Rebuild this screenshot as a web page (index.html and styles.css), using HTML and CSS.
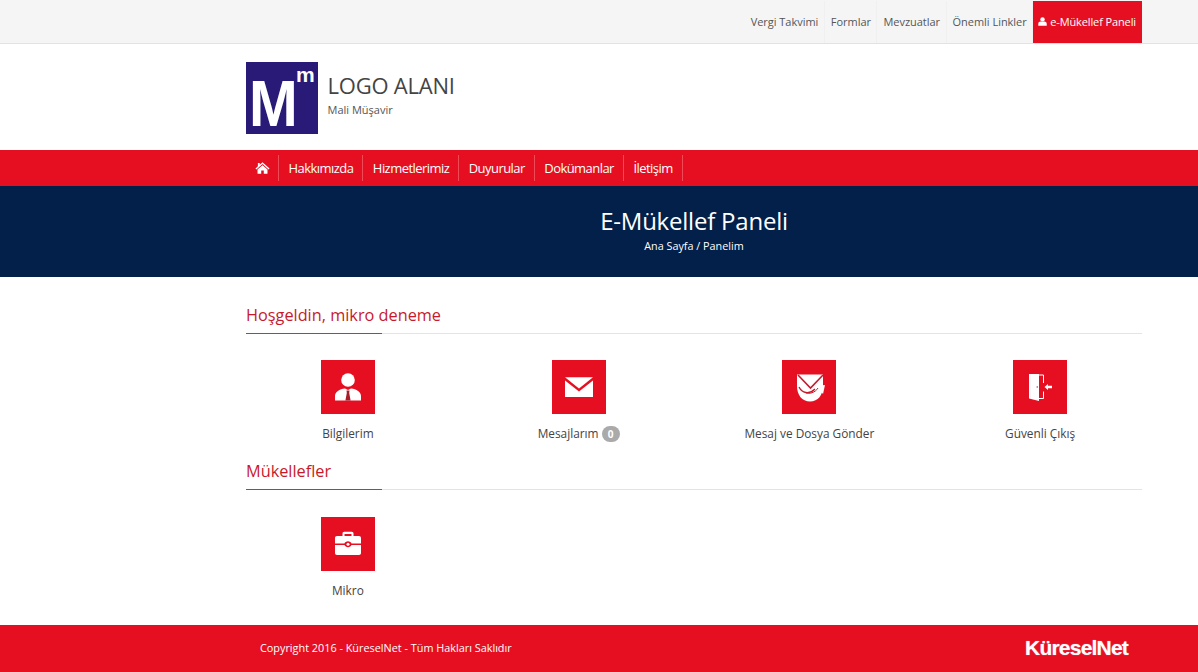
FILE: index.html
```html
<!DOCTYPE html>
<html lang="tr">
<head>
    <meta charset="UTF-8">
    <meta name="viewport" content="width=device-width, initial-scale=1.0">
    <title>E-Mükellef Paneli</title>
    <link rel="stylesheet" href="styles.css">
</head>
<body>
    <div class="topbar">
        <div class="container topbar-inner">
            <a class="top-link">Vergi Takvimi</a>
            <a class="top-link">Formlar</a>
            <a class="top-link">Mevzuatlar</a>
            <a class="top-link">Önemli Linkler</a>
            <a class="top-link top-link-active">
                <svg class="user-mini" viewBox="0 0 10 10"><circle cx="5" cy="2.7" r="2.5" fill="#fff"/><path d="M0.3 9.6V7.6C0.3 6 1.6 5.2 3 5.1C3.6 5.7 6.4 5.7 7 5.1C8.4 5.2 9.7 6 9.7 7.6V9.6Z" fill="#fff"/></svg>
                e-Mükellef Paneli
            </a>
        </div>
    </div>

    <div class="container header">
        <div class="logo-box">
            <span class="logo-big">M</span>
            <span class="logo-small">m</span>
        </div>
        <div class="logo-text">
            <div class="logo-title">LOGO ALANI</div>
            <div class="logo-sub">Mali Müşavir</div>
        </div>
    </div>

    <div class="navbar">
        <div class="container nav-inner">
            <a class="nav-link nav-home">
                <svg class="home-icon" viewBox="0 0 16 13"><path d="M8 0.4L15.6 7L14.7 8L8 2.3L1.3 8L0.4 7L3 4.7V1H5V3L8 0.4Z" fill="#fff"/><path d="M8 3.4L13.4 8V12.8H9.4V9.2H6.6V12.8H2.6V8Z" fill="#fff"/></svg>
            </a>
            <a class="nav-link">Hakkımızda</a>
            <a class="nav-link">Hizmetlerimiz</a>
            <a class="nav-link">Duyurular</a>
            <a class="nav-link">Dokümanlar</a>
            <a class="nav-link">İletişim</a>
        </div>
    </div>

    <div class="hero">
        <div class="container">
            <h1>E-Mükellef Paneli</h1>
            <div class="crumbs">Ana Sayfa / Panelim</div>
        </div>
    </div>

    <div class="container content">
        <h2 class="section-title">Hoşgeldin, mikro deneme</h2>
        <div class="tiles tiles-first">
            <a class="tile">
                <span class="tile-icon">
                    <svg viewBox="0 0 54 54"><circle cx="27" cy="20" r="6.800" fill="#fff"/><path d="M14 40.500V36C14 32 18.500 29 24 28.500L27 30L30 28.500C35.500 29 40 32 40 36V40.500Z" fill="#fff"/><path d="M25.500 30.500H28.500L28.200 33L29.600 40.500H24.400L25.800 33Z" fill="#a81c2a"/></svg>
                </span>
                <span class="tile-label">Bilgilerim</span>
            </a>
            <a class="tile">
                <span class="tile-icon">
                    <svg viewBox="0 0 54 54"><path d="M13 17.200H41L27 28.600Z" fill="#fff"/><path d="M13 20.500L27 31.600L41 20.500V37H13Z" fill="#fff"/></svg>
                </span>
                <span class="tile-label">Mesajlarım <span class="badge">0</span></span>
            </a>
            <a class="tile">
                <span class="tile-icon">
                    <svg viewBox="0 0 54 54"><path d="M15 14.500H41V26C41 35 36 41.500 28 41.500C20 41.500 15 35 15 26Z" fill="#fff"/><path d="M16 15L28.500 28L41 15" fill="none" stroke="#c8192b" stroke-width="1.600"/><path d="M17 27C20 33 27 35 33 29" fill="none" stroke="#c8192b" stroke-width="1.400"/><path d="M24 33C27 34 33 33 36 28" fill="none" stroke="#c8192b" stroke-width="1"/><path d="M35 26L43 25L41 34Z" fill="#fff"/></svg>
                </span>
                <span class="tile-label">Mesaj ve Dosya Gönder</span>
            </a>
            <a class="tile">
                <span class="tile-icon">
                    <svg viewBox="0 0 54 54"><path d="M16 14H26V41L16 38.500Z" fill="#fff"/><path d="M26 15H30.500V23M30.500 31.500V38.500H26" fill="none" stroke="#fff" stroke-width="1"/><path d="M31.500 27L35 24V25.800H39V28.200H35V30Z" fill="#fff"/><circle cx="24.200" cy="27" r=".7" fill="#a81c2a"/></svg>
                </span>
                <span class="tile-label">Güvenli Çıkış</span>
            </a>
        </div>

        <h2 class="section-title">Mükellefler</h2>
        <div class="tiles">
            <a class="tile">
                <span class="tile-icon">
                    <svg viewBox="0 0 54 54"><path d="M21.500 19V16.500C21.500 15.500 22.200 14.800 23.200 14.800H30.800C31.800 14.800 32.500 15.500 32.500 16.500V19H30.500V17H23.500V19Z" fill="#fff"/><path d="M14 21C14 19.800 14.800 19 16 19H38C39.200 19 40 19.800 40 21V26.500H30.500C30.200 25.300 28.500 24.300 27 24.300C25.500 24.300 23.800 25.300 23.500 26.500H14Z" fill="#fff"/><path d="M14 28H23.500C23.800 29.200 25.500 30.200 27 30.200C28.500 30.200 30.200 29.200 30.500 28H40V36C40 37.200 39.200 38 38 38H16C14.800 38 14 37.200 14 36Z" fill="#fff"/><circle cx="27" cy="27.200" r="1.500" fill="#fff"/></svg>
                </span>
                <span class="tile-label">Mikro</span>
            </a>
        </div>
    </div>

    <div class="footer">
        <div class="container footer-inner">
            <span class="copyright">Copyright 2016 - KüreselNet - Tüm Hakları Saklıdır</span>
            <span class="brand">KüreselNet</span>
        </div>
    </div>
</body>
</html>
```

FILE: styles.css
```css
* {
    box-sizing: border-box;
}
body {
    margin: 0;
    font-family: "Open Sans", Arial, sans-serif;
    font-size: 12px;
    color: #444;
    background-color: #fff;
    overflow: hidden;
}
.container {
    width: 896px;
    margin-left: 246px;
}

/* top bar */
.topbar {
    height: 44px;
    background-color: #f5f5f5;
    border-bottom: 1px solid #e2e2e2;
}
.topbar-inner {
    display: flex;
    justify-content: flex-end;
    height: 43px;
    padding-top: 1px;
}
.top-link {
    display: flex;
    align-items: center;
    padding: 0 5.500px 2px 6px;
    font-size: 11px;
    letter-spacing: -0.03px;
    color: #555;
    border-right: 1px solid #f0f0f0;
}
.top-link-active {
    padding: 0 6px 2px 5px;
    background-color: #e60f21;
    color: #fff;
    border-right: 0;
    letter-spacing: -0.12px;
}
.user-mini {
    width: 9px;
    height: 9px;
    margin-right: 3px;
}

/* logo */
.header {
    display: flex;
    height: 106px;
    padding-top: 18px;
}
.logo-box {
    position: relative;
    width: 72px;
    height: 72px;
    background-color: #2a1a78;
}
.logo-big {
    position: absolute;
    left: 3px;
    top: 16.500px;
    font-family: "Liberation Sans", Arial, sans-serif;
    font-weight: bold;
    font-size: 65px;
    line-height: 50px;
    color: #fff;
    transform: scaleX(0.9);
    transform-origin: left top;
}
.logo-small {
    position: absolute;
    left: 50px;
    top: 1.500px;
    font-family: "Liberation Sans", Arial, sans-serif;
    font-weight: bold;
    font-size: 21px;
    line-height: 21px;
    color: #fff;
}
.logo-text {
    margin-left: 9.500px;
    padding-top: 8px;
}
.logo-title {
    font-size: 22px;
    line-height: 30px;
    letter-spacing: -0.22px;
    color: #444;
}
.logo-sub {
    margin-top: 2px;
    font-size: 11px;
    line-height: 16px;
    color: #555;
}

/* menu */
.navbar {
    height: 36px;
    background-color: #e60f21;
}
.nav-inner {
    display: flex;
    height: 36px;
    padding-top: 5px;
}
.nav-link {
    display: flex;
    align-items: center;
    height: 26px;
    padding: 0 9px 0 9.500px;
    border-right: 1px solid #f04a57;
    font-size: 13px;
    letter-spacing: -0.55px;
    color: #fff;
}
.nav-home {
    padding: 0 8px 0 9px;
}
.home-icon {
    width: 15px;
    height: 12px;
}

/* page title */
.hero {
    height: 91px;
    padding-top: 20px;
    background-color: #03204a;
    color: #fff;
    text-align: center;
}
.hero h1 {
    margin: 0;
    font-size: 24px;
    font-weight: 400;
    line-height: 30px;
    letter-spacing: -0.22px;
}
.crumbs {
    margin-top: 2px;
    font-size: 10.800px;
    line-height: 16px;
}

/* panel */
.content {
    height: 348px;
    padding-top: 25px;
}
.section-title {
    position: relative;
    margin: 0;
    height: 32px;
    font-size: 16.300px;
    font-weight: 400;
    line-height: 26px;
    color: #c8192b;
    border-bottom: 1px solid #e4e4e4;
}
.section-title::after {
    content: "";
    position: absolute;
    left: 0;
    bottom: -1px;
    width: 136px;
    height: 1px;
    background-color: #ee2233;
}
.tiles {
    display: grid;
    grid-template-columns: repeat(4, 1fr);
    margin: 0 -13.500px;
    padding-top: 27px;
    height: 124px;
}
.tiles-first {
    padding-top: 26px;
}
.tile {
    display: flex;
    flex-direction: column;
    align-items: center;
}
.tile-icon {
    width: 54px;
    height: 54px;
    background-color: #e60f21;
}
.tile-icon svg {
    display: block;
    width: 54px;
    height: 54px;
}
.tile-label {
    margin-top: 10px;
    font-size: 11.850px;
    line-height: 18px;
    color: #444;
}
.badge {
    display: inline-block;
    min-width: 18px;
    height: 16px;
    padding: 0 5px;
    border-radius: 8px;
    background-color: #aaa;
    color: #fff;
    font-size: 10px;
    font-weight: 700;
    line-height: 16px;
    text-align: center;
}

/* footer */
.footer {
    height: 47px;
    background-color: #e60f21;
    color: #fff;
}
.footer-inner {
    display: flex;
    justify-content: space-between;
    align-items: center;
    height: 46px;
    padding: 0 14px;
}
.copyright {
    margin-bottom: 2px;
    font-size: 10.850px;
}
.brand {
    font-family: "Liberation Sans", Arial, sans-serif;
    font-size: 21px;
    font-weight: bold;
    letter-spacing: -0.8px;
    text-shadow: 0 0 1px #f7a0a8;
}
```
